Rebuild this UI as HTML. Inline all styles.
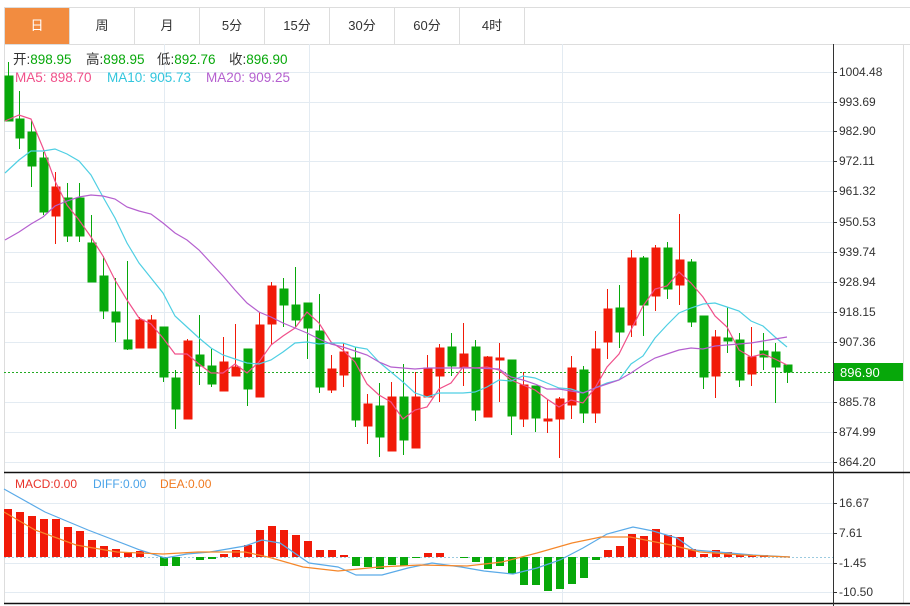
<!DOCTYPE html>
<html><head><meta charset="utf-8"><style>
body{margin:0;background:#fff;width:910px;height:606px;overflow:hidden;font-family:"Liberation Sans","Noto Sans CJK SC",sans-serif}
.tabs{position:absolute;left:4px;top:7px;height:36px;width:906px;border-top:1px solid #ddd;border-bottom:1px solid #ddd;display:flex;border-left:1px solid #ddd}
.tabs div{width:64px;border-right:1px solid #ddd;text-align:center;line-height:36px;font-size:13px;color:#333}
.tabs div.a{background:#f28c40;color:#fff}
svg{position:absolute;left:0;top:0}
</style></head><body>
<div class="tabs"><div class="a">日</div><div>周</div><div>月</div><div>5分</div><div>15分</div><div>30分</div><div>60分</div><div>4时</div></div>
<svg width="910" height="606" viewBox="0 0 910 606" font-family="Liberation Sans, Noto Sans CJK SC, sans-serif">
<g stroke="#e3ebf2" stroke-width="1">
<path d="M4 72.5H833M4 102.5H833M4 131.5H833M4 161.5H833M4 191.5H833M4 222.5H833M4 252.5H833M4 282.5H833M4 312.5H833M4 342.5H833M4 402.5H833M4 432.5H833M4 462.5H833M4 503.5H833M4 533.5H833M4 563.5H833M4 592.5H833"/>
<path d="M164.5 44V603M309.5 44V603M562.5 44V603"/>
</g>
<path d="M4.5 44V603M903.5 44V603" stroke="#ddd"/>
<path d="M4 472.5H910M4 603.5H910" stroke="#111" stroke-width="1.5"/>
<path d="M833.5 44V606" stroke="#333"/>
<path d="M833 72.5h4M833 102.5h4M833 131.5h4M833 161.5h4M833 191.5h4M833 222.5h4M833 252.5h4M833 282.5h4M833 312.5h4M833 342.5h4M833 402.5h4M833 432.5h4M833 462.5h4M833 503.5h4M833 533.5h4M833 563.5h4M833 592.5h4" stroke="#333"/>
<g font-size="12" fill="#333">
<text x="839" y="76">1004.48</text><text x="839" y="106">993.69</text><text x="839" y="135">982.90</text><text x="839" y="165">972.11</text><text x="839" y="195">961.32</text><text x="839" y="226">950.53</text><text x="839" y="256">939.74</text><text x="839" y="286">928.94</text><text x="839" y="316">918.15</text><text x="839" y="346">907.36</text><text x="839" y="406">885.78</text><text x="839" y="436">874.99</text><text x="839" y="466">864.20</text>
<text x="839" y="507">16.67</text><text x="839" y="537">7.61</text><text x="839" y="567">-1.45</text><text x="839" y="596">-10.50</text>
</g>
<path d="M4 372.5H833" stroke="#22aa22" stroke-dasharray="2,2"/>
<rect x="834" y="363" width="69" height="18" fill="#07a80a"/>
<text x="840" y="377" font-size="13" fill="#fff">896.90</text>
<g fill="#07a80a" stroke="#07a80a">
<path d="M8.5 62V121M19.5 91V149M31.5 121V187M43.5 152V215M67.5 183V242M79.5 183V242M91.5 215V282M103.5 256V319M115.5 278V342M127.5 261V350M163.5 327V382M175.5 370V429M199.5 315V385M211.5 349V387M247.5 349V406M283.5 278V327M295.5 267V327M307.5 303V359M319.5 294V393M355.5 347V427M379.5 383V457M403.5 364V455M451.5 333V376M475.5 340V421M511.5 360V435M535.5 386V432M583.5 366V423M619.5 285V348M643.5 256V336M667.5 242V299M691.5 259V327M703.5 316V389M727.5 307V353M739.5 333V387M763.5 333V370M775.5 343V403M787.5 365V383" fill="none"/>
<rect x="5" y="76" width="8" height="45"/><rect x="16" y="119" width="8" height="19"/><rect x="28" y="132" width="8" height="34"/><rect x="40" y="158" width="8" height="54"/><rect x="64" y="198" width="8" height="38"/><rect x="76" y="198" width="8" height="38"/><rect x="88" y="243" width="8" height="39"/><rect x="100" y="276" width="8" height="35"/><rect x="112" y="312" width="8" height="10"/><rect x="124" y="340" width="8" height="9"/><rect x="160" y="327" width="8" height="50"/><rect x="172" y="378" width="8" height="31"/><rect x="196" y="355" width="8" height="11"/><rect x="208" y="366" width="8" height="18"/><rect x="244" y="349" width="8" height="40"/><rect x="280" y="289" width="8" height="16"/><rect x="292" y="305" width="8" height="15"/><rect x="304" y="303" width="8" height="25"/><rect x="316" y="331" width="8" height="56"/><rect x="352" y="358" width="8" height="62"/><rect x="376" y="406" width="8" height="31"/><rect x="400" y="397" width="8" height="43"/><rect x="448" y="347" width="8" height="19"/><rect x="472" y="347" width="8" height="63"/><rect x="508" y="360" width="8" height="56"/><rect x="532" y="386" width="8" height="32"/><rect x="580" y="370" width="8" height="43"/><rect x="616" y="308" width="8" height="24"/><rect x="640" y="258" width="8" height="47"/><rect x="664" y="248" width="8" height="41"/><rect x="688" y="262" width="8" height="60"/><rect x="700" y="316" width="8" height="61"/><rect x="724" y="338" width="8" height="3"/><rect x="736" y="340" width="8" height="40"/><rect x="760" y="351" width="8" height="6"/><rect x="772" y="352" width="8" height="15"/><rect x="784" y="365" width="8" height="7"/>
</g>
<g fill="#f11a08" stroke="#f11a08">
<path d="M55.5 172V244M139.5 317V348M151.5 315V348M187.5 339V419M223.5 337V391M235.5 324V376M259.5 312V397M271.5 282V345M331.5 355V393M343.5 343V387M367.5 394V444M391.5 382V451M415.5 372V448M427.5 355V397M439.5 344V402M463.5 323V386M487.5 356V417M499.5 343V402M523.5 372V427M547.5 400V433M559.5 397V458M571.5 356V419M595.5 331V423M607.5 289V359M631.5 250V337M655.5 245V311M679.5 214V305M715.5 330V398M751.5 327V386" fill="none"/>
<rect x="52" y="187" width="8" height="29"/><rect x="136" y="320" width="8" height="28"/><rect x="148" y="320" width="8" height="28"/><rect x="184" y="341" width="8" height="78"/><rect x="220" y="362" width="8" height="29"/><rect x="232" y="367" width="8" height="9"/><rect x="256" y="325" width="8" height="72"/><rect x="268" y="286" width="8" height="38"/><rect x="328" y="369" width="8" height="21"/><rect x="340" y="352" width="8" height="23"/><rect x="364" y="404" width="8" height="22"/><rect x="388" y="397" width="8" height="54"/><rect x="412" y="397" width="8" height="51"/><rect x="424" y="368" width="8" height="29"/><rect x="436" y="348" width="8" height="28"/><rect x="460" y="354" width="8" height="14"/><rect x="484" y="357" width="8" height="60"/><rect x="496" y="358" width="8" height="2"/><rect x="520" y="385" width="8" height="34"/><rect x="544" y="419" width="8" height="2"/><rect x="556" y="399" width="8" height="20"/><rect x="568" y="368" width="8" height="37"/><rect x="592" y="349" width="8" height="64"/><rect x="604" y="309" width="8" height="33"/><rect x="628" y="258" width="8" height="67"/><rect x="652" y="248" width="8" height="48"/><rect x="676" y="260" width="8" height="25"/><rect x="712" y="337" width="8" height="39"/><rect x="748" y="357" width="8" height="17"/>
</g>
<g fill="none" stroke-width="1.2">
<polyline stroke="#f0508a" points="5,121 19,115 31,119 43,148 55,181 67,205 79,220 91,237 103,256 115,280 127,300 139,318 151,324 163,338 175,354 187,354 199,364 211,373 223,373 235,364 247,373 259,362 271,345 283,336 295,328 307,312 319,323 331,342 343,350 355,362 367,384 379,395 391,402 403,419 415,410 427,407 439,389 451,383 463,367 475,368 487,367 499,370 511,380 523,385 535,390 547,399 559,407 571,400 583,403 595,388 607,367 619,354 631,330 643,306 655,289 667,286 679,272 691,283 703,297 715,316 727,327 739,350 751,357 763,354 775,359 787,365"/>
<polyline stroke="#4fcfe3" points="5,173 19,160 31,151 43,151 55,149 67,154 79,161 91,175 103,197 115,218 127,243 139,263 151,278 163,293 175,316 187,327 199,338 211,348 223,355 235,359 247,363 259,364 271,360 283,352 295,343 307,342 319,344 331,343 343,343 355,347 367,349 379,362 391,372 403,382 415,393 427,397 439,393 451,393 463,393 475,392 487,387 499,380 511,381 523,376 535,378 547,383 559,388 571,389 583,393 595,388 607,383 619,380 631,364 643,356 655,338 667,325 679,313 691,308 703,304 715,303 727,307 739,311 751,321 763,326 775,337 787,347"/>
<polyline stroke="#b560cf" points="5,240 19,232 31,224 43,217 55,206 67,201 79,197 91,195 103,196 115,199 127,207 139,211 151,214 163,223 175,233 187,240 199,250 211,263 223,276 235,290 247,303 259,312 271,317 283,323 295,328 307,333 319,339 331,344 343,347 355,351 367,355 379,362 391,367 403,368 415,369 427,368 451,368 475,368 499,369 511,377 523,380 535,384 547,389 559,389 571,391 583,393 595,388 607,384 619,380 631,373 643,365 655,358 667,354 679,350 691,348 703,349 715,346 727,345 739,344 751,343 763,341 775,339 787,337"/>
</g>
<g font-size="13.5">
<text x="13" y="64" fill="#333">开:<tspan fill="#07a80a">898.95</tspan></text>
<text x="86" y="64" fill="#333">高:<tspan fill="#07a80a">898.95</tspan></text>
<text x="157" y="64" fill="#333">低:<tspan fill="#07a80a">892.76</tspan></text>
<text x="229" y="64" fill="#333">收:<tspan fill="#07a80a">896.90</tspan></text>
<text x="15" y="82" fill="#f0508a">MA5: 898.70</text><text x="107" y="82" fill="#33c6dd">MA10: 905.73</text><text x="206" y="82" fill="#b560cf">MA20: 909.25</text>
</g>
<g font-size="12"><text x="15" y="488" fill="#e8332a">MACD:0.00</text><text x="93" y="488" fill="#4aa3e8">DIFF:0.00</text><text x="160" y="488" fill="#f07a20">DEA:0.00</text></g>
<path d="M4 557.5H833" stroke="#9ccbe0" stroke-dasharray="2,2"/>
<g fill="#f11a08">
<rect x="4" y="509" width="8" height="48"/><rect x="16" y="512" width="8" height="45"/><rect x="28" y="516" width="8" height="41"/><rect x="40" y="519" width="8" height="38"/><rect x="52" y="519" width="8" height="38"/><rect x="64" y="527" width="8" height="30"/><rect x="76" y="531" width="8" height="26"/><rect x="88" y="540" width="8" height="17"/><rect x="100" y="546" width="8" height="11"/><rect x="112" y="549" width="8" height="8"/><rect x="124" y="552" width="8" height="5"/><rect x="136" y="551" width="8" height="6"/>
<rect x="220" y="554" width="8" height="3"/><rect x="232" y="550" width="8" height="7"/><rect x="244" y="545" width="8" height="12"/><rect x="256" y="530" width="8" height="27"/><rect x="268" y="526" width="8" height="31"/><rect x="280" y="530" width="8" height="27"/><rect x="292" y="535" width="8" height="22"/><rect x="304" y="541" width="8" height="16"/><rect x="316" y="550" width="8" height="7"/><rect x="328" y="550" width="8" height="7"/><rect x="340" y="555" width="8" height="2"/>
<rect x="424" y="553" width="8" height="4"/><rect x="436" y="553" width="8" height="4"/>
<rect x="604" y="550" width="8" height="7"/><rect x="616" y="546" width="8" height="11"/><rect x="628" y="534" width="8" height="23"/><rect x="640" y="536" width="8" height="21"/><rect x="652" y="529" width="8" height="28"/><rect x="664" y="535" width="8" height="22"/><rect x="676" y="537" width="8" height="20"/><rect x="688" y="549" width="8" height="8"/><rect x="700" y="554" width="8" height="3"/><rect x="712" y="550" width="8" height="7"/><rect x="724" y="552" width="8" height="5"/><rect x="736" y="555" width="8" height="2"/><rect x="748" y="555" width="8" height="2"/><rect x="760" y="555" width="8" height="2"/>
</g>
<g fill="#07a80a">
<rect x="160" y="557" width="8" height="9"/><rect x="172" y="557" width="8" height="9"/><rect x="196" y="557" width="8" height="3"/><rect x="208" y="557" width="8" height="2"/>
<rect x="352" y="557" width="8" height="9"/><rect x="364" y="557" width="8" height="10"/><rect x="376" y="557" width="8" height="12"/><rect x="388" y="557" width="8" height="8"/><rect x="400" y="557" width="8" height="9"/><rect x="412" y="557" width="8" height="1"/>
<rect x="460" y="557" width="8" height="1"/><rect x="472" y="557" width="8" height="5"/><rect x="484" y="557" width="8" height="12"/><rect x="496" y="557" width="8" height="9"/><rect x="508" y="557" width="8" height="17"/><rect x="520" y="557" width="8" height="28"/><rect x="532" y="557" width="8" height="28"/><rect x="544" y="557" width="8" height="34"/><rect x="556" y="557" width="8" height="32"/><rect x="568" y="557" width="8" height="27"/><rect x="580" y="557" width="8" height="21"/><rect x="592" y="557" width="8" height="3"/>
</g>
<g fill="none" stroke-width="1.2">
<polyline stroke="#5aaae8" points="4,489 45,512 88,530 140,550 165,558 187,554 210,552 245,546 262,540 280,543 309,563 338,567 356,575 382,575 408,568 432,563 461,567 484,571 513,574 537,568 560,560 583,548 607,534 633,527 653,531 677,538 694,550 718,552 753,555 790,557"/>
<polyline stroke="#f5872a" points="4,512 35,530 76,545 117,552 163,554 198,552 245,552 268,557 303,567 338,571 379,567 420,565 467,566 502,562 537,553 572,543 601,537 630,537 671,545 700,552 741,555 790,557"/>
</g>
</svg>
</body></html>
